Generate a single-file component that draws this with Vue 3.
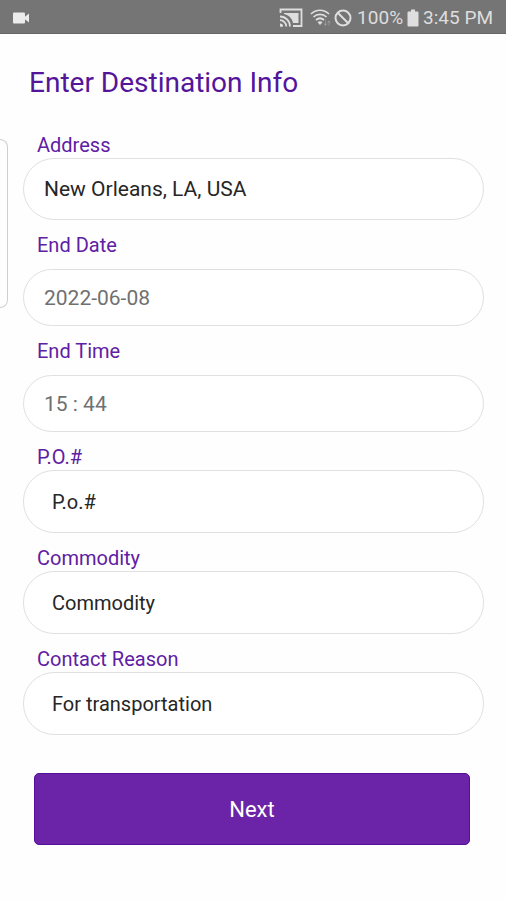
<script setup>
import { reactive } from 'vue'

const fields = reactive([
  { id: 'address', label: 'Address', value: 'New Orleans, LA, USA', kind: 'place' },
  { id: 'end-date', label: 'End Date', value: '2022-06-08', kind: 'picker' },
  { id: 'end-time', label: 'End Time', value: '15 : 44', kind: 'picker' },
  { id: 'po', label: 'P.O.#', value: 'P.o.#', kind: 'entry' },
  { id: 'commodity', label: 'Commodity', value: 'Commodity', kind: 'entry' },
  { id: 'reason', label: 'Contact Reason', value: 'For transportation', kind: 'entry' },
])
</script>

<template>
  <div class="screen">
    <header class="status">
      <svg class="camera" width="18" height="12" viewBox="0 0 18 12" aria-hidden="true">
        <rect x="0" y="0.5" width="12" height="11" rx="1" />
        <path d="M11 5.5L16 1.5V10.5L11 6.5Z" />
      </svg>
      <div class="indicators">
        <svg width="24" height="20" viewBox="0 0 24 20" fill="none" stroke="currentColor" stroke-width="1.8" aria-hidden="true">
          <path d="M1.5 5V1.5H22.500V18H14" />
          <path d="M5 5H19.500V15H14C13 10.500 10 7 5 6Z" fill="currentColor" stroke="none" />
          <path d="M1 8.500C6.500 8.500 11 13 11 18.500M1 12.200C4.500 12.200 7.300 15 7.300 18.500" />
          <path d="M1 15.500A3 3 0 0 1 4 18.800H1Z" fill="currentColor" stroke="none" />
        </svg>
        <svg class="wifi" width="22" height="18" viewBox="0 0 22 18" fill="none" stroke="currentColor" stroke-width="1.7" aria-hidden="true">
          <path d="M1 5C6 0 14 0 19 5M3.500 8C7 4.500 13 4.500 16.500 8M6 11C8.500 8.800 11.500 8.800 14 11" />
          <path d="M7.500 13.200Q10 11.500 12.500 13.200L10 16Z" fill="currentColor" stroke="none" />
          <path d="M15.500 11V16M14 14.500L15.500 16.500L17 14.500M19 16.500V12M17.700 13.500L19 12L20.300 13.500" stroke-width="1" opacity="0.3" />
        </svg>
        <svg class="block" width="18" height="18" viewBox="0 0 18 18" fill="none" stroke="currentColor" stroke-width="2" aria-hidden="true">
          <circle cx="9" cy="9" r="7.500" />
          <path d="M3.700 3.700L14.300 14.300" />
        </svg>
        <span class="percent">100%</span>
        <svg class="battery" width="12" height="18" viewBox="0 0 12 18" aria-hidden="true">
          <path d="M4 0.500H8V2.500H10.500Q11.500 2.500 11.500 3.500V16.500Q11.500 17.500 10.500 17.500H1.500Q0.500 17.500 0.500 16.500V3.500Q0.500 2.500 1.500 2.500H4Z" fill="currentColor" />
        </svg>
        <span>3:45 PM</span>
      </div>
    </header>

    <div class="edge-panel"></div>

    <main>
      <h1>Enter Destination Info</h1>
      <form @submit.prevent>
        <div v-for="field in fields" :key="field.id" class="field" :class="field.kind">
          <label :for="field.id">{{ field.label }}</label>
          <input :id="field.id" v-model="field.value" type="text" />
        </div>
        <button type="submit">Next</button>
      </form>
    </main>
  </div>
</template>

<style>
body {
  margin: 0;
  background: #fefefe;
}
</style>

<style scoped>
.screen {
  position: relative;
  box-sizing: border-box;
  min-height: 100vh;
  font-family: Roboto, "Liberation Sans", sans-serif;
  background: #fefefe;
}

.status {
  display: flex;
  align-items: center;
  justify-content: space-between;
  box-sizing: border-box;
  height: 34px;
  padding: 2px 13px 0;
  border-bottom: 1px solid #686868;
  background: #757575;
  color: #dedede;
  font-size: 19px;
}

.camera {
  fill: #ececec;
}

.indicators {
  display: flex;
  align-items: center;
  line-height: 24px;
  white-space: nowrap;
}

.wifi {
  margin-left: 7px;
}

.block {
  margin-left: 2px;
}

.percent {
  margin-left: 5px;
}

.battery {
  margin: 0 4px;
}

.edge-panel {
  position: absolute;
  top: 139px;
  left: 0;
  box-sizing: border-box;
  width: 8px;
  height: 169px;
  border: 1px solid #cfcfcf;
  border-left: 0;
  border-radius: 0 8px 8px 0;
}

main {
  padding: 33px 22px 48px 23px;
}

h1 {
  margin: 0 0 34px;
  padding-left: 6px;
  color: #54159b;
  font-size: 28px;
  font-weight: 400;
  line-height: 32px;
}

form {
  display: flex;
  flex-direction: column;
  gap: 13px;
}

.field {
  display: flex;
  flex-direction: column;
  gap: 1px;
}

label {
  padding-left: 14px;
  color: #5f20a4;
  font-size: 20px;
  line-height: 24px;
}

input {
  box-sizing: border-box;
  width: 100%;
  height: 62px;
  padding: 0 28px;
  border: 1px solid #e0e0e0;
  border-radius: 31px;
  outline: none;
  background: #fff;
  color: #262626;
  font-family: inherit;
  font-size: 20px;
}

.place input,
.picker input {
  padding: 0 20px;
  font-size: 21px;
}

.picker {
  gap: 12px;
}

.picker input {
  height: 57px;
  color: #707070;
}

.entry {
  gap: 1px;
}

.entry input {
  height: 63px;
}

button {
  height: 72px;
  margin: 25px 14px 0 11px;
  padding: 0;
  border: 1px solid #540f9b;
  border-radius: 5px;
  background: #6b23a8;
  color: #fff;
  font-family: inherit;
  font-size: 22px;
}
</style>
